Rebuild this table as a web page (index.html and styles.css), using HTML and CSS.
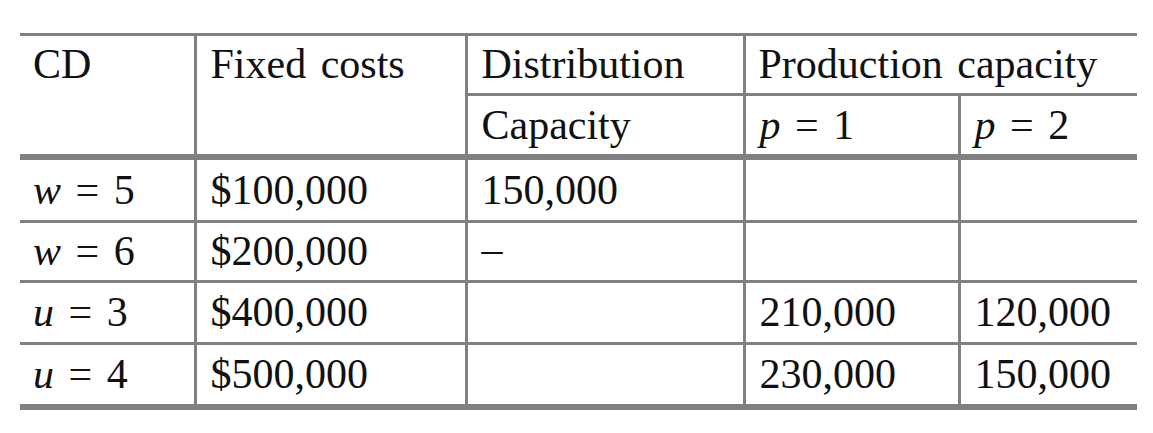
FILE: index.html
```html
<!DOCTYPE html>
<html lang="en">
<head>
<meta charset="utf-8">
<title>CD costs and capacities</title>
<link rel="stylesheet" href="styles.css">
</head>
<body>
<div class="page">
  <table class="cap-table">
    <colgroup>
      <col class="c1">
      <col class="c2">
      <col class="c3">
      <col class="c4">
      <col class="c5">
    </colgroup>
    <thead>
      <tr class="h1">
        <th rowspan="2" class="top">CD</th>
        <th rowspan="2" class="top">Fixed costs</th>
        <th class="sub">Distribution</th>
        <th colspan="2" class="sub">Production capacity</th>
      </tr>
      <tr class="h2">
        <th>Capacity</th>
        <th><i>p</i> = 1</th>
        <th><i>p</i> = 2</th>
      </tr>
    </thead>
    <tbody>
      <tr class="r1">
        <td><i>w</i> = 5</td>
        <td>$100,000</td>
        <td>150,000</td>
        <td></td>
        <td></td>
      </tr>
      <tr class="r2">
        <td><i>w</i> = 6</td>
        <td>$200,000</td>
        <td><span class="dash">–</span></td>
        <td></td>
        <td></td>
      </tr>
      <tr class="r3">
        <td><i>u</i> = 3</td>
        <td>$400,000</td>
        <td></td>
        <td>210,000</td>
        <td>120,000</td>
      </tr>
      <tr class="r4">
        <td><i>u</i> = 4</td>
        <td>$500,000</td>
        <td></td>
        <td>230,000</td>
        <td>150,000</td>
      </tr>
    </tbody>
  </table>
</div>
</body>
</html>
```

FILE: styles.css
```css
html, body {
  margin: 0;
  padding: 0;
  background: #ffffff;
}

.page {
  padding: 33px 0 0 20px;
}

.cap-table {
  width: 1117px;
  table-layout: fixed;
  border-collapse: collapse;
  font-family: "Liberation Serif", "Times New Roman", serif;
  font-size: 42px;
  word-spacing: 4px;
  color: #111111;
  border-top: 3px solid #808080;
  border-bottom: 6px solid #808080;
}

.c1 { width: 175px; }
.c2 { width: 271px; }
.c3 { width: 278px; }
.c4 { width: 215px; }
.c5 { width: 178px; }

.cap-table th,
.cap-table td {
  font-weight: normal;
  text-align: left;
  vertical-align: top;
  padding: 0 0 0 14px;
  white-space: nowrap;
  border-left: 3px solid #808080;
  border-right: 3px solid #808080;
}

.cap-table th:first-child,
.cap-table td:first-child {
  border-left: none;
  padding-left: 13px;
}

.cap-table tr th:last-child,
.cap-table tr td:last-child {
  border-right: none;
}

.cap-table .h1 th:first-child {
  border-right: 3px solid #808080;
}

.cap-table .h1 th {
  line-height: 57px;
}

.cap-table .h1 .sub {
  border-bottom: 3px solid #808080;
}

.cap-table .h1 .sub:last-child {
  padding-left: 13px;
}

.cap-table .h2 th {
  line-height: 58px;
  border-bottom: 6px solid #808080;
}

.cap-table .h2 th:first-child {
  padding-left: 14px;
}

.cap-table .h1 .top {
  border-bottom: 6px solid #808080;
}

.cap-table tbody tr {
  border-bottom: 3px solid #808080;
}

.cap-table tbody tr:last-child {
  border-bottom: 6px solid #808080;
}

.cap-table .r1 td { line-height: 60px; }
.cap-table .r2 td { line-height: 57px; }
.cap-table .r3 td { line-height: 59px; }
.cap-table .r4 td { line-height: 59px; }

.cap-table i {
  font-style: italic;
}

.dash {
  display: inline-block;
  transform: translateY(-2px);
}
```
